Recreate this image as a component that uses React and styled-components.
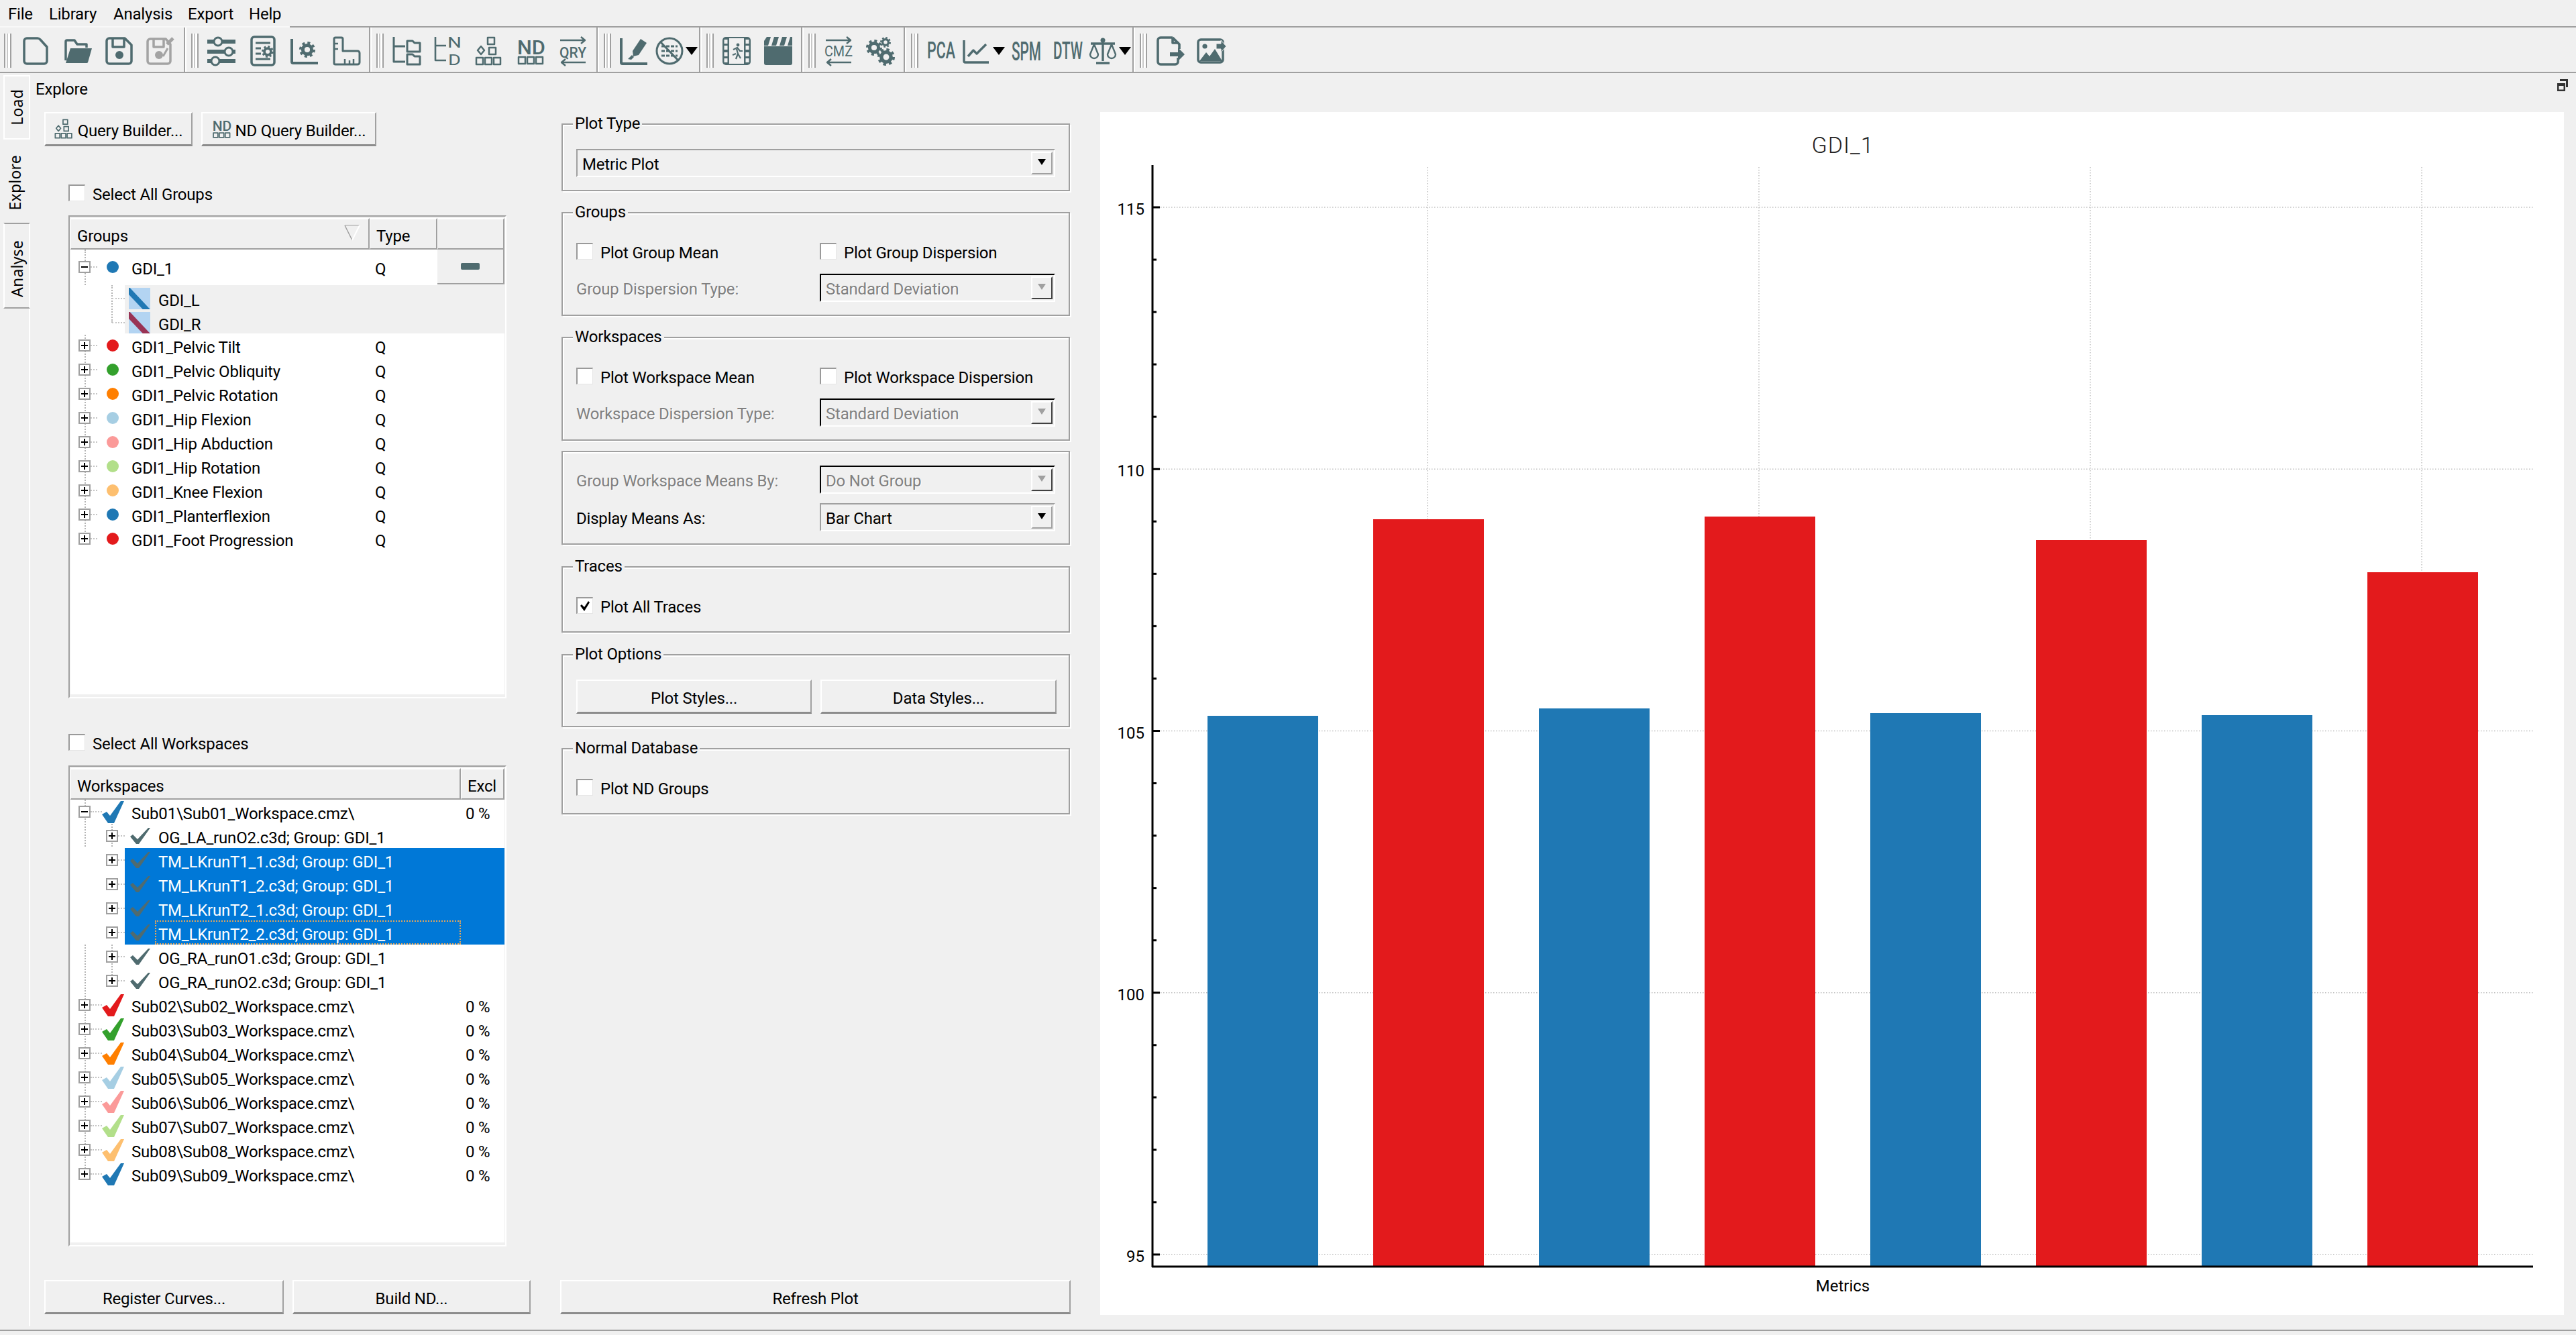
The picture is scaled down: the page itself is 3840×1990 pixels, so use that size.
import React from "react";
import styled, { createGlobalStyle } from "styled-components";

const INK = "#4f6b6f";
const GRID = "#c0c0c0";
const BLUE = "#1f78b4";
const RED = "#e31a1c";

const GlobalStyle = createGlobalStyle`
  html, body {
    margin: 0;
    padding: 0;
    background: #f0f0f0;
  }
  * {
    box-sizing: border-box;
  }
`;

const Window = styled.div`
  width: 3840px;
  height: 1990px;
  overflow: hidden;
  display: flex;
  flex-direction: column;
  background: #f0f0f0;
  color: #000;
  font-family: Roboto, "Noto Sans", sans-serif;
  font-size: 24px;
  letter-spacing: -0.2px;
`;

/* menu */
const MenuRow = styled.div`
  display: flex;
  height: 41px;
`;

const MenuItems = styled.div`
  display: flex;
  width: 432px;
  padding: 4px 0 0 12px;
  border-bottom: 2px solid #f8f8f8;
`;

const MenuItem = styled.span`
  width: ${(p) => p.$w}px;
  line-height: 34px;
`;

const MenuFill = styled.div`
  flex: 1;
  border-bottom: 2px solid #a0a0a0;
`;

/* toolbar */
const ToolBar = styled.div`
  display: flex;
  height: 68px;
  border-bottom: 2px solid #a0a0a0;
`;

const ToolSection = styled.div`
  display: flex;
  align-items: center;
  width: ${(p) => p.$w}px;
  padding-left: ${(p) => (p.$first ? 6 : 9)}px;
  border-right: ${(p) => (p.$last ? "none" : "2px solid #a0a0a0")};
  box-shadow: ${(p) => (p.$last ? "none" : "2px 0 0 #fff")};
`;

const Grip = styled.div`
  width: 11px;
  height: 51px;
  margin-right: ${(p) => (p.$first ? 6 : 3)}px;
  margin-top: 2px;
  background: #fff;
  border-left: 2px solid #a0a0a0;
  border-right: 2px solid #a0a0a0;
  box-shadow: inset 2px 0 0 #fff, inset 4px 0 0 #c8c8c8;
`;

const Tool = styled.div`
  width: ${(p) => p.$w || 62}px;
  height: 66px;
  display: flex;
  align-items: center;
  justify-content: ${(p) => (p.$menu ? "flex-start" : "center")};
  padding-top: 4px;
`;

const Caret = styled.span`
  width: 0;
  height: 0;
  margin-left: 2px;
  border-left: 9px solid transparent;
  border-right: 9px solid transparent;
  border-top: 12px solid #000;
`;

const IconSvg = styled.svg.attrs({ viewBox: "0 0 44 44" })`
  width: 44px;
  height: 44px;
  flex: none;
  overflow: visible;
  fill: none;
  stroke: ${(p) => p.$color || INK};
  stroke-width: 3.5;
  stroke-linejoin: round;
`;

const ButtonIcon = styled(IconSvg)`
  width: 30px;
  height: 30px;
  margin-top: -6px;
`;

const LabelText = styled.text`
  font-family: "Roboto", sans-serif;
  font-weight: ${(p) => p.$weight || 500};
  fill: ${INK};
  stroke: none;
  letter-spacing: 0;
`;

function Gear({ x, y, r, color = INK }) {
  const teeth = 2 * Math.PI * r * 0.85;
  return (
    <g stroke={color} fill="none">
      <circle cx={x} cy={y} r={r * 0.55} strokeWidth={r * 0.42} />
      <circle
        cx={x}
        cy={y}
        r={r * 0.85}
        strokeWidth={r * 0.3}
        strokeDasharray={`${teeth / 16} ${teeth / 16}`}
      />
    </g>
  );
}

function Squares({ x, y, s = 10, gap = 3 }) {
  return (
    <g strokeWidth="2.5">
      {[0, 1, 2].map((i) => (
        <rect key={i} x={x + i * (s + gap)} y={y} width={s} height={s} />
      ))}
    </g>
  );
}

function SwapArrows({ children }) {
  return (
    <IconSvg>
      <path d="M3 6h37M34 1l6 5-6 5" strokeWidth="2.4" />
      <path d="M41 39H5M11 34l-6 5 6 5" strokeWidth="2.4" />
      {children}
    </IconSvg>
  );
}

const queryShapes = (
  <>
    <rect x="19" y="2" width="10" height="10" strokeWidth="2.5" />
    <path d="M9 15l5 6-5 6-5-6z" strokeWidth="2.5" />
    <rect x="21" y="17" width="10" height="10" strokeWidth="2.5" />
    <Squares x={2} y={32} />
  </>
);

const ndShapes = (
  <>
    <LabelText x="1" y="27" fontSize="29" textLength="42" lengthAdjust="spacingAndGlyphs">
      ND
    </LabelText>
    <Squares x={3} y={31} />
  </>
);

const icons = {
  newFile: (
    <IconSvg>
      <path d="M8 3h16c2 0 3 1 4 2l10 11v21a4 4 0 0 1-4 4H8a4 4 0 0 1-4-4V7a4 4 0 0 1 4-4z" />
    </IconSvg>
  ),
  open: (
    <IconSvg>
      <path d="M4 36V8a2 2 0 0 1 2-2h11l4 6h14v5" />
      <path d="M11 18h32l-6 21a2 2 0 0 1-2 1H4z" fill={INK} stroke="none" />
    </IconSvg>
  ),
  save: (
    <IconSvg>
      <path d="M7 3h23l10 10v24a4 4 0 0 1-4 4H7a4 4 0 0 1-4-4V7a4 4 0 0 1 4-4z" />
      <path d="M12 3v13h17V3" />
      <circle cx="22" cy="28" r="6" fill={INK} stroke="none" />
    </IconSvg>
  ),
  saveAs: (
    <IconSvg $color="#a3a3a3">
      <path d="M6 4h23l7 8v25a4 4 0 0 1-4 4H6a4 4 0 0 1-4-4V8a4 4 0 0 1 4-4z" />
      <path d="M11 4v12h15V4" />
      <circle cx="19" cy="28" r="6" fill="#a3a3a3" stroke="none" />
      <path d="M31 12l9-9" strokeWidth="5" />
      <path d="M25 30l7-12" strokeWidth="3" />
    </IconSvg>
  ),
  sliders: (
    <IconSvg>
      <path d="M1 8h42M1 23h42M1 37h42" strokeWidth="6" />
      <circle cx="17" cy="8" r="6" fill="#f0f0f0" strokeWidth="3" />
      <circle cx="33" cy="23" r="6" fill="#f0f0f0" strokeWidth="3" />
      <circle cx="13" cy="37" r="6" fill="#f0f0f0" strokeWidth="3" />
    </IconSvg>
  ),
  config: (
    <IconSvg>
      <rect x="5" y="1" width="34" height="42" rx="4" />
      <path d="M11 10h22M11 18h8M11 26h8M11 34h22" strokeWidth="3" />
      <Gear x={29} y={23} r={9} />
    </IconSvg>
  ),
  axisGear: (
    <IconSvg>
      <path d="M3 4v34a2 2 0 0 0 2 2h37" strokeWidth="4" />
      <Gear x={26} y={20} r={12} />
    </IconSvg>
  ),
  ruler: (
    <IconSvg>
      <path d="M4 4a2 2 0 0 1 2-2h9a2 2 0 0 1 2 2v18h22a3 3 0 0 1 3 3v14a3 3 0 0 1-3 3H6a2 2 0 0 1-2-2z" strokeWidth="3" />
      <path d="M4 11h6M4 19h6M20 42v-8M27 42v-6M33 42v-8" strokeWidth="2.5" />
    </IconSvg>
  ),
  treeFolders: (
    <IconSvg>
      <path d="M3 1v37h17M3 15h17" strokeWidth="3" />
      <path d="M23 7h8l3 3h8v13H23zM23 27h8l3 3h8v12H23z" strokeWidth="3" />
    </IconSvg>
  ),
  treeNd: (
    <IconSvg>
      <path d="M3 1v35h16M3 14h16" strokeWidth="2.6" />
      <LabelText x="21" y="17" fontSize="22" $weight="400" textLength="21" lengthAdjust="spacingAndGlyphs">
        N
      </LabelText>
      <LabelText x="22" y="43" fontSize="22" $weight="400" textLength="19" lengthAdjust="spacingAndGlyphs">
        D
      </LabelText>
    </IconSvg>
  ),
  query: <IconSvg>{queryShapes}</IconSvg>,
  nd: <IconSvg>{ndShapes}</IconSvg>,
  qry: (
    <SwapArrows>
      <LabelText x="2" y="32" fontSize="22" textLength="40" lengthAdjust="spacingAndGlyphs">
        QRY
      </LabelText>
    </SwapArrows>
  ),
  highlight: (
    <IconSvg>
      <path d="M3 3v36a2 2 0 0 0 2 2h37" strokeWidth="4" />
      <path d="M20 22L32 4l9 6-12 18-8 2z" fill={INK} stroke="none" />
      <path d="M13 34l6-6 3 3-4 4z" fill={INK} stroke="none" />
    </IconSvg>
  ),
  noLines: (
    <IconSvg>
      <circle cx="22" cy="22" r="19" strokeWidth="3" />
      <path d="M10 15h24M10 22h24M10 29h24" strokeWidth="3" strokeDasharray="5 2" />
      <path d="M9 9l26 27" strokeWidth="3" />
    </IconSvg>
  ),
  film: (
    <IconSvg>
      <rect x="1" y="1" width="42" height="42" rx="5" fill={INK} stroke="none" />
      <rect x="11" y="3" width="22" height="38" fill="#f0f0f0" stroke="none" />
      {[5, 14, 24, 33].map((y) => (
        <g key={y} fill="#f0f0f0" stroke="none">
          <rect x="3.5" y={y} width="5" height="6" />
          <rect x="35.5" y={y} width="5" height="6" />
        </g>
      ))}
      <circle cx="24" cy="13" r="2.4" fill={INK} stroke="none" />
      <path d="M17 20l6-3 4 5h4M22 19l2 7-3 8M24 26l4 7M21 26l-5 2" strokeWidth="2.2" />
    </IconSvg>
  ),
  clapper: (
    <IconSvg>
      <path d="M1 14V7L5 1h6L7 14zM12 14l4-13h7l-4 13zM24 14l4-13h7l-4 13zM36 14l4-13h3v13z" fill={INK} stroke="none" />
      <path d="M1 15h42v25a3 3 0 0 1-3 3H4a3 3 0 0 1-3-3z" fill={INK} stroke="none" />
    </IconSvg>
  ),
  cmz: (
    <SwapArrows>
      <LabelText x="1" y="30" fontSize="22" $weight="400" textLength="42" lengthAdjust="spacingAndGlyphs">
        CMZ
      </LabelText>
    </SwapArrows>
  ),
  gears: (
    <IconSvg>
      <Gear x={13} y={17} r={12} />
      <Gear x={30} y={9} r={8} />
      <Gear x={31} y={31} r={13} />
    </IconSvg>
  ),
  pca: (
    <IconSvg>
      <LabelText x="1" y="33" fontSize="35" textLength="42" lengthAdjust="spacingAndGlyphs">
        PCA
      </LabelText>
    </IconSvg>
  ),
  chart: (
    <IconSvg>
      <path d="M3 6v31a2 2 0 0 0 2 2h35" strokeWidth="3.4" />
      <path d="M9 30l8-9 5 5 14-14" strokeWidth="3.4" />
    </IconSvg>
  ),
  spm: (
    <IconSvg>
      <LabelText x="0" y="36" fontSize="38" textLength="44" lengthAdjust="spacingAndGlyphs">
        SPM
      </LabelText>
    </IconSvg>
  ),
  dtw: (
    <IconSvg>
      <LabelText x="0" y="34" fontSize="36" textLength="44" lengthAdjust="spacingAndGlyphs">
        DTW
      </LabelText>
    </IconSvg>
  ),
  scales: (
    <IconSvg>
      <path d="M22 4v33M12 40h20M4 11h36" strokeWidth="3.4" />
      <circle cx="22" cy="6" r="3.5" fill={INK} stroke="none" />
      <path d="M9 12L3 27a6 6 0 0 0 12 0zM35 12l-6 15a6 6 0 0 0 12 0z" strokeWidth="2.4" />
    </IconSvg>
  ),
  exportDoc: (
    <IconSvg>
      <path d="M26 2H8a4 4 0 0 0-4 4v32a4 4 0 0 0 4 4h22a4 4 0 0 0 4-4v-6" strokeWidth="3.6" />
      <path d="M26 2v8h10M26 2l10 10v7" strokeWidth="3.6" />
      <path d="M22 24h12v-7l10 10-10 10v-7H22z" fill={INK} stroke="none" />
    </IconSvg>
  ),
  exportImage: (
    <IconSvg>
      <rect x="2" y="5" width="37" height="34" rx="4" />
      <circle cx="12" cy="15" r="3.6" fill={INK} stroke="none" />
      <path d="M4 37l10-13 5 6 8-11 11 18z" fill={INK} stroke="none" />
      <path d="M29 11h7V6l8 9-8 9v-5h-7z" fill={INK} stroke="#f0f0f0" strokeWidth="1" />
    </IconSvg>
  ),
};

const toolGroups = [
  { w: 276, tools: ["newFile", "open", "save", "saveAs"] },
  { w: 276, tools: ["sliders", "config", "axisGear", "ruler"] },
  { w: 339, tools: ["treeFolders", "treeNd", "query", "nd", "qry"] },
  { w: 153, tools: ["highlight", "noLines*"] },
  { w: 152, tools: ["film", "clapper"] },
  { w: 153, tools: ["cmz", "gears"] },
  { w: 341, tools: ["pca", "chart*", "spm", "dtw", "scales*"] },
  { w: 160, tools: ["exportDoc", "exportImage"], last: true },
];

/* side tabs */
const Body = styled.div`
  flex: 1;
  display: flex;
  min-height: 0;
`;

const TabStrip = styled.div`
  width: 45px;
  display: flex;
  flex-direction: column;
  padding-top: 3px;
  margin-bottom: 5px;
`;

const SideTab = styled.div`
  height: ${(p) => p.$h}px;
  margin-left: ${(p) => (p.$active ? 0 : 5)}px;
  display: flex;
  align-items: center;
  justify-content: center;
  border-left: ${(p) => (p.$active ? "none" : "2px solid #fff")};
  border-top: 2px solid ${(p) => (p.$grey ? "#a0a0a0" : "#fff")};
  border-bottom: 2px solid ${(p) => (p.$grey ? "#a0a0a0" : "#fff")};
  border-right: ${(p) => (p.$active ? "none" : "2px solid #fff")};
  ${(p) => p.$active && "border-top: none; border-bottom: none; padding-top: 4px;"}
  ${(p) => p.$grey && "padding-top: 8px;"}
  span {
    writing-mode: vertical-rl;
    transform: rotate(180deg);
    font-family: "Noto Sans", sans-serif;
    font-size: 23px;
    letter-spacing: 0.2px;
    line-height: 1;
  }
`;

const StripFill = styled.div`
  flex: 1;
  border-right: 2px solid #fff;
`;

/* explore pane */
const Pane = styled.div`
  flex: 1;
  min-width: 0;
  display: flex;
  flex-direction: column;
`;

const PaneTitle = styled.div`
  height: 58px;
  display: flex;
  justify-content: space-between;
  padding: 8px 11px 0 8px;
  line-height: 32px;
`;

const PaneColumns = styled.div`
  flex: 1;
  min-height: 0;
  display: grid;
  grid-template-columns: 725px 761px 2182px;
  column-gap: 44px;
  padding-left: 21px;
`;

const Column = styled.div`
  display: flex;
  flex-direction: column;
  height: 1792px;
`;

/* buttons */
const PushButton = styled.div`
  width: ${(p) => p.$w}px;
  height: 51px;
  flex: none;
  display: flex;
  align-items: center;
  justify-content: center;
  gap: 5px;
  padding-top: 6px;
  border-top: 2px solid #fff;
  border-left: 2px solid #fff;
  border-right: 2px solid #a0a0a0;
  border-bottom: 3px solid #8c8c8c;
  background: #f0f0f0;
`;

const ButtonRow = styled.div`
  display: flex;
  gap: 13px;
  margin-top: ${(p) => (p.$bottom ? "auto" : `${p.$top || 0}px`)};
`;

/* checkbox */
const CheckRow = styled.label`
  display: flex;
  align-items: center;
  gap: 11px;
  height: 25px;
  margin-left: ${(p) => p.$left || 0}px;
  margin-top: ${(p) => p.$top || 0}px;
`;

const CheckText = styled.span`
  padding-top: 4px;
`;

const Box = styled.span`
  width: 25px;
  height: 25px;
  flex: none;
  display: flex;
  align-items: center;
  justify-content: center;
  background: #fff;
  border-top: 2px solid #9a9a9a;
  border-left: 2px solid #9a9a9a;
  border-right: 1px solid #e6e6e6;
  border-bottom: 1px solid #e6e6e6;
`;

function Check({ label, checked, left, top }) {
  return (
    <CheckRow $left={left} $top={top}>
      <Box>
        {checked && (
          <svg width="16" height="15" viewBox="0 0 16 15">
            <path d="M1 7l2-2 4 4 6-9 2 2-8 13z" fill="#000" />
          </svg>
        )}
      </Box>
      <CheckText>{label}</CheckText>
    </CheckRow>
  );
}

/* tree views */
const TreeFrame = styled.div`
  width: 653px;
  height: ${(p) => p.$h}px;
  margin-left: 36px;
  margin-top: ${(p) => p.$top}px;
  flex: none;
  display: flex;
  flex-direction: column;
  padding: 2px 1px 4px;
  background: #f0f0f0;
  border-top: 2px solid #a0a0a0;
  border-left: 2px solid #a0a0a0;
  border-right: 2px solid #fff;
  border-bottom: 2px solid #fff;
`;

const TreeHeader = styled.div`
  display: grid;
  grid-template-columns: ${(p) => p.$cols};
  height: 47px;
  flex: none;
`;

const HeaderCell = styled.div`
  position: relative;
  display: flex;
  align-items: center;
  padding: 6px 0 0 9px;
  border-top: 2px solid #fff;
  border-left: 1px solid #fff;
  border-right: 2px solid #a0a0a0;
  border-bottom: 2px solid #a0a0a0;
`;

const SortMark = styled.svg`
  position: absolute;
  right: 12px;
  top: 8px;
  width: 24px;
  height: 24px;
`;

const TreeBody = styled.div`
  position: relative;
  flex: 1;
  background: #fff;
  &::before {
    content: "";
    position: absolute;
    left: 21px;
    top: 0;
    height: ${(p) => p.$line}px;
    border-left: 2px dotted #b5b5b5;
  }
`;

const Row = styled.div`
  position: relative;
  display: flex;
  align-items: center;
  height: ${(p) => p.$h || 36}px;
  color: ${(p) => (p.$selected ? "#fff" : "#000")};
  background: ${(p) =>
    p.$selected ? "linear-gradient(to right, #fff 81px, #0078d7 81px)" : "transparent"};
`;

const Expander = styled.span`
  position: relative;
  z-index: 1;
  width: 18px;
  height: 18px;
  flex: none;
  margin-left: ${(p) => p.$left}px;
  border: 2px solid #a0a0a0;
  background-color: #fff;
  background-image: linear-gradient(#000, #000)
    ${(p) => (p.$open ? "" : ", linear-gradient(#000, #000)")};
  background-repeat: no-repeat;
  background-position: ${(p) => (p.$open ? "center" : "center, center")};
  background-size: ${(p) => (p.$open ? "10px 2px" : "10px 2px, 2px 10px")};
`;

const Branch = styled.span`
  width: ${(p) => p.$w}px;
  flex: none;
  height: 0;
  margin-left: ${(p) => p.$left || 0}px;
  border-top: 2px dotted #c4c4c4;
`;

const Dot = styled.span`
  width: 18px;
  height: 18px;
  flex: none;
  margin: 0 19px 0 14px;
  border-radius: 50%;
  background: ${(p) => p.$c};
`;

const ItemText = styled.span`
  flex: ${(p) => (p.$w ? "none" : 1)};
  width: ${(p) => (p.$w ? `${p.$w}px` : "auto")};
  white-space: nowrap;
  padding-top: 5px;
`;

const KindCell = styled.span`
  padding-top: 5px;
`;

const MinusButton = styled.div`
  position: absolute;
  right: 0;
  top: 0;
  width: 100px;
  height: 52px;
  display: flex;
  align-items: center;
  justify-content: center;
  background: #f0f0f0;
  border-right: 2px solid #a0a0a0;
  border-bottom: 2px solid #a0a0a0;
  &::after {
    content: "";
    width: 28px;
    height: 10px;
    border-radius: 2px;
    background: ${INK};
  }
`;

const ChildBlock = styled.div`
  position: relative;
  &::before {
    content: "";
    position: absolute;
    left: 61px;
    top: 0;
    height: ${(p) => p.$h}px;
    border-left: 2px dotted #b5b5b5;
  }
`;

const ChildPanel = styled(ChildBlock)`
  height: 72px;
  margin-top: 1px;
  padding-top: 2px;
  background: linear-gradient(to right, #fff 81px, #f0f0f0 81px);
`;

const CurveSwatch = styled.svg`
  width: 32px;
  height: 32px;
  flex: none;
  margin: 0 12px 0 6px;
`;

const TickSvg = styled.svg`
  flex: none;
  width: ${(p) => p.$w}px;
  height: ${(p) => p.$h}px;
  margin: ${(p) => p.$m};
  fill: ${(p) => p.$c};
`;

const FocusBox = styled.span`
  position: absolute;
  left: 126px;
  top: 0;
  width: 456px;
  height: 36px;
  border: 2px dotted #e6a65a;
`;

const PercentCell = styled.span`
  padding-top: 5px;
`;

/* group boxes */
const GroupBox = styled.div`
  position: relative;
  width: 758px;
  height: ${(p) => p.$h}px;
  margin: ${(p) => p.$top}px 0 0 2px;
  flex: none;
  padding: ${(p) => p.$pt}px 20px 0;
  border: 2px solid #a0a0a0;
  box-shadow: inset 2px 2px 0 #fff, 2px 2px 0 #fff;
`;

const GroupTitle = styled.span`
  position: absolute;
  left: 15px;
  top: -17px;
  padding: 0 3px;
  line-height: 30px;
  background: #f0f0f0;
`;

const FormGrid = styled.div`
  display: grid;
  grid-template-columns: 363px 351px;
  align-items: center;
  row-gap: ${(p) => p.$gap}px;
`;

const FormLabel = styled.span`
  padding-top: 4px;
  color: ${(p) => (p.$off ? "#808080" : "#000")};
  text-shadow: ${(p) => (p.$off ? "1px 1px 0 #fff" : "none")};
`;

const ComboBox = styled.div`
  display: flex;
  align-items: center;
  height: 42px;
  padding: 0 2px 0 7px;
  color: ${(p) => (p.$off ? "#808080" : "#000")};
  text-shadow: ${(p) => (p.$off ? "1px 1px 0 #fff" : "none")};
  border-top: 2px solid ${(p) => (p.$off ? "#000" : "#a0a0a0")};
  border-left: 2px solid ${(p) => (p.$off ? "#000" : "#a0a0a0")};
  border-right: 2px solid #fff;
  border-bottom: 2px solid #fff;
`;

const ComboText = styled.span`
  flex: 1;
  padding-top: 4px;
`;

const ComboArrow = styled.span`
  width: 32px;
  height: 34px;
  display: flex;
  align-items: center;
  justify-content: center;
  border-top: 2px solid #fff;
  border-left: 2px solid #fff;
  border-right: 2px solid ${(p) => (p.$off ? "#404040" : "#a0a0a0")};
  border-bottom: 2px solid ${(p) => (p.$off ? "#404040" : "#a0a0a0")};
  &::after {
    content: "";
    margin-top: -4px;
    border-left: 6px solid transparent;
    border-right: 6px solid transparent;
    border-top: 9px solid ${(p) => (p.$off ? "#a0a0a0" : "#000")};
  }
`;

function Combo({ value, off }) {
  return (
    <ComboBox $off={off}>
      <ComboText>{value}</ComboText>
      <ComboArrow $off={off} />
    </ComboBox>
  );
}

const ChartPanel = styled.div`
  width: 2182px;
  height: 1793px;
  background: #fff;
  svg {
    display: block;
  }
`;

const ChartLabel = styled.text`
  font-family: Roboto, "Noto Sans", sans-serif;
  font-size: ${(p) => p.$size || 24}px;
  font-weight: ${(p) => p.$weight || 400};
  letter-spacing: ${(p) => p.$ls || 0}px;
  fill: ${(p) => p.$c || "#000"};
`;

const StatusLine = styled.div`
  height: 8px;
  flex: none;
  border-top: 2px solid #a0a0a0;
`;

const groupRows = [
  ["GDI1_Pelvic Tilt", RED],
  ["GDI1_Pelvic Obliquity", "#33a02c"],
  ["GDI1_Pelvic Rotation", "#ff7f00"],
  ["GDI1_Hip Flexion", "#a6cee3"],
  ["GDI1_Hip Abduction", "#fb9a99"],
  ["GDI1_Hip Rotation", "#b2df8a"],
  ["GDI1_Knee Flexion", "#fdbf6f"],
  ["GDI1_Planterflexion", BLUE],
  ["GDI1_Foot Progression", RED],
];

const trialRows = [
  ["OG_LA_runO2.c3d; Group: GDI_1"],
  ["TM_LKrunT1_1.c3d; Group: GDI_1", "sel"],
  ["TM_LKrunT1_2.c3d; Group: GDI_1", "sel"],
  ["TM_LKrunT2_1.c3d; Group: GDI_1", "sel"],
  ["TM_LKrunT2_2.c3d; Group: GDI_1", "focus"],
  ["OG_RA_runO1.c3d; Group: GDI_1"],
  ["OG_RA_runO2.c3d; Group: GDI_1"],
];

const workspaceRows = [
  ["Sub02", RED],
  ["Sub03", "#33a02c"],
  ["Sub04", "#ff7f00"],
  ["Sub05", "#a6cee3"],
  ["Sub06", "#fb9a99"],
  ["Sub07", "#b2df8a"],
  ["Sub08", "#fdbf6f"],
  ["Sub09", BLUE],
];

const bars = [
  [1800, 1067, BLUE],
  [2047, 774, RED],
  [2294, 1056, BLUE],
  [2541, 770, RED],
  [2788, 1063, BLUE],
  [3035, 805, RED],
  [3282, 1066, BLUE],
  [3529, 853, RED],
];

const yOf = (v) => 1870 - (v - 95) * 78.05;

function BigTick({ color }) {
  return (
    <TickSvg $w={33} $h={33} $m="0 11px 0 0" $c={color} viewBox="0 0 33 33">
      <path d="M0 20l7-4 5 6L28 0h5L18 33H9z" />
    </TickSvg>
  );
}

function SmallTick() {
  return (
    <TickSvg $w={30} $h={24} $m="0 12px 0 8px" $c={INK} viewBox="0 0 30 24">
      <path d="M0 13l4-3 7 7L27 0h3L13 24H9z" />
    </TickSvg>
  );
}

function Chart() {
  const minor = [];
  for (let v = 95; v <= 115; v += 1) {
    if (v % 5) minor.push(yOf(v));
  }
  return (
    <svg width="2182" height="1793" viewBox="1640 167 2182 1793">
      <ChartLabel x="2747" y="228" textAnchor="middle" $size={34} $ls={1} $c="#222" $weight={300}>
        GDI_1
      </ChartLabel>
      {[2128, 2622, 3116, 3610].map((x) => (
        <line key={x} x1={x} x2={x} y1="249" y2="1888" stroke={GRID} strokeWidth="1.5" strokeDasharray="1.5 2.5" />
      ))}
      {[95, 100, 105, 110, 115].map((v) => (
        <g key={v}>
          <line x1="1730" x2="3776" y1={yOf(v)} y2={yOf(v)} stroke={GRID} strokeWidth="1.5" strokeDasharray="1.5 2.5" />
          <line x1="1718" x2="1729" y1={yOf(v)} y2={yOf(v)} stroke="#000" strokeWidth="3" />
          <ChartLabel x="1706" y={yOf(v) + 11} textAnchor="end">
            {v}
          </ChartLabel>
        </g>
      ))}
      {minor.map((y) => (
        <line key={y} x1="1718" x2="1724" y1={y} y2={y} stroke="#000" strokeWidth="3" />
      ))}
      {bars.map(([x, top, color]) => (
        <rect key={x} x={x} y={top} width="165" height={1888 - top} fill={color} />
      ))}
      <line x1="1718" x2="1718" y1="246" y2="1889" stroke="#000" strokeWidth="3" />
      <line x1="1717" x2="3776" y1="1888" y2="1888" stroke="#000" strokeWidth="3" />
      <ChartLabel x="2747" y="1925" textAnchor="middle">
        Metrics
      </ChartLabel>
    </svg>
  );
}

export default function App() {
  return (
    <Window>
      <GlobalStyle />
      <MenuRow>
        <MenuItems>
          <MenuItem $w={61}>File</MenuItem>
          <MenuItem $w={96}>Library</MenuItem>
          <MenuItem $w={111}>Analysis</MenuItem>
          <MenuItem $w={91}>Export</MenuItem>
          <MenuItem $w={50}>Help</MenuItem>
        </MenuItems>
        <MenuFill />
      </MenuRow>

      <ToolBar>
        {toolGroups.map((group, i) => (
          <ToolSection key={i} $w={group.w} $first={i === 0} $last={group.last}>
            <Grip $first={i === 0} />
            {group.tools.map((name) => {
              const menu = name.endsWith("*");
              const icon = icons[name.replace("*", "")];
              return menu ? (
                <Tool key={name} $w={66} $menu>
                  {icon}
                  <Caret />
                </Tool>
              ) : (
                <Tool key={name}>{icon}</Tool>
              );
            })}
          </ToolSection>
        ))}
      </ToolBar>

      <Body>
        <TabStrip>
          <SideTab $h={96}>
            <span>Load</span>
          </SideTab>
          <SideTab $h={124} $active>
            <span>Explore</span>
          </SideTab>
          <SideTab $h={128} $grey>
            <span>Analyse</span>
          </SideTab>
          <StripFill />
        </TabStrip>

        <Pane>
          <PaneTitle>
            Explore
            <svg width="18" height="20" viewBox="0 0 18 20">
              <path d="M5 1h12v12h-3V4H5zM1 7h12v12H1z M3.5 11v5.500h7V11z" fill="#333" fillRule="evenodd" />
            </svg>
          </PaneTitle>
          <PaneColumns>
            <Column>
              <ButtonRow>
                <PushButton $w={221}>
                  <ButtonIcon>{queryShapes}</ButtonIcon>
                  Query Builder...
                </PushButton>
                <PushButton $w={261}>
                  <ButtonIcon>{ndShapes}</ButtonIcon>
                  ND Query Builder...
                </PushButton>
              </ButtonRow>

              <Check label="Select All Groups" left={36} top={57} />
              <TreeFrame $h={720} $top={21}>
                <TreeHeader $cols="446px 101px 100px">
                  <HeaderCell>
                    Groups
                    <SortMark viewBox="0 0 24 24">
                      <path d="M1 1h22" stroke="#bbb" strokeWidth="1.500" fill="none" />
                      <path d="M1 1l11 22" stroke="#a0a0a0" strokeWidth="1.500" fill="none" />
                      <path d="M23 1L12 23" stroke="#fff" strokeWidth="2" fill="none" />
                    </SortMark>
                  </HeaderCell>
                  <HeaderCell>Type</HeaderCell>
                  <HeaderCell />
                </TreeHeader>
                <TreeBody $line={432}>
                  <Row $h={52}>
                    <Expander $left={12} $open />
                    <Branch $w={10} />
                    <Dot $c={BLUE} />
                    <ItemText $w={363}>GDI_1</ItemText>
                    <KindCell>Q</KindCell>
                    <MinusButton />
                  </Row>
                  <ChildPanel $h={56}>
                    {[
                      ["GDI_L", BLUE],
                      ["GDI_R", "#993355"],
                    ].map(([name, color]) => (
                      <Row key={name}>
                        <Branch $w={19} $left={62} />
                        <CurveSwatch viewBox="0 0 32 32">
                          <rect width="32" height="32" fill="#b3d4f2" />
                          <path d="M-2 2L30 36" stroke={color} strokeWidth="8" />
                        </CurveSwatch>
                        <ItemText>{name}</ItemText>
                      </Row>
                    ))}
                  </ChildPanel>
                  {groupRows.map(([name, color]) => (
                    <Row key={name}>
                      <Expander $left={12} />
                      <Branch $w={10} />
                      <Dot $c={color} />
                      <ItemText $w={363}>{name}</ItemText>
                      <KindCell>Q</KindCell>
                    </Row>
                  ))}
                </TreeBody>
              </TreeFrame>

              <Check label="Select All Workspaces" left={36} top={53} />
              <TreeFrame $h={717} $top={22}>
                <TreeHeader $cols="582px 65px">
                  <HeaderCell>Workspaces</HeaderCell>
                  <HeaderCell>Excl</HeaderCell>
                </TreeHeader>
                <TreeBody $line={558}>
                  <Row>
                    <Expander $left={12} $open />
                    <Branch $w={17} />
                    <BigTick color={BLUE} />
                    <ItemText $w={498}>Sub01\Sub01_Workspace.cmz\</ItemText>
                    <PercentCell>0 %</PercentCell>
                  </Row>
                  <ChildBlock $h={234}>
                    {trialRows.map(([name, state]) => (
                      <Row key={name} $selected={!!state}>
                        <Expander $left={53} />
                        <Branch $w={10} />
                        {state === "focus" && <FocusBox />}
                        <SmallTick />
                        <ItemText>{name}</ItemText>
                      </Row>
                    ))}
                  </ChildBlock>
                  {workspaceRows.map(([sub, color]) => (
                    <Row key={sub}>
                      <Expander $left={12} />
                      <Branch $w={17} />
                      <BigTick color={color} />
                      <ItemText $w={498}>{`${sub}\\${sub}_Workspace.cmz\\`}</ItemText>
                      <PercentCell>0 %</PercentCell>
                    </Row>
                  ))}
                </TreeBody>
              </TreeFrame>

              <ButtonRow $top={50}>
                <PushButton $w={357}>Register Curves...</PushButton>
                <PushButton $w={355}>Build ND...</PushButton>
              </ButtonRow>
            </Column>

            <Column>
              <GroupBox $h={101} $top={17} $pt={36}>
                <GroupTitle>Plot Type</GroupTitle>
                <Combo value="Metric Plot" />
              </GroupBox>

              <GroupBox $h={155} $top={31} $pt={44}>
                <GroupTitle>Groups</GroupTitle>
                <FormGrid $gap={21}>
                  <Check label="Plot Group Mean" />
                  <Check label="Plot Group Dispersion" />
                  <FormLabel $off>Group Dispersion Type:</FormLabel>
                  <Combo value="Standard Deviation" off />
                </FormGrid>
              </GroupBox>

              <GroupBox $h={155} $top={31} $pt={44}>
                <GroupTitle>Workspaces</GroupTitle>
                <FormGrid $gap={21}>
                  <Check label="Plot Workspace Mean" />
                  <Check label="Plot Workspace Dispersion" />
                  <FormLabel $off>Workspace Dispersion Type:</FormLabel>
                  <Combo value="Standard Deviation" off />
                </FormGrid>
              </GroupBox>

              <GroupBox $h={140} $top={15} $pt={20}>
                <FormGrid $gap={14}>
                  <FormLabel $off>Group Workspace Means By:</FormLabel>
                  <Combo value="Do Not Group" off />
                  <FormLabel>Display Means As:</FormLabel>
                  <Combo value="Bar Chart" />
                </FormGrid>
              </GroupBox>

              <GroupBox $h={99} $top={32} $pt={44}>
                <GroupTitle>Traces</GroupTitle>
                <Check label="Plot All Traces" checked />
              </GroupBox>

              <GroupBox $h={109} $top={32} $pt={36}>
                <GroupTitle>Plot Options</GroupTitle>
                <ButtonRow>
                  <PushButton $w={351}>Plot Styles...</PushButton>
                  <PushButton $w={352}>Data Styles...</PushButton>
                </ButtonRow>
              </GroupBox>

              <GroupBox $h={99} $top={31} $pt={44}>
                <GroupTitle>Normal Database</GroupTitle>
                <Check label="Plot ND Groups" />
              </GroupBox>

              <ButtonRow $bottom>
                <PushButton $w={761}>Refresh Plot</PushButton>
              </ButtonRow>
            </Column>

            <ChartPanel>
              <Chart />
            </ChartPanel>
          </PaneColumns>
        </Pane>
      </Body>
      <StatusLine />
    </Window>
  );
}
